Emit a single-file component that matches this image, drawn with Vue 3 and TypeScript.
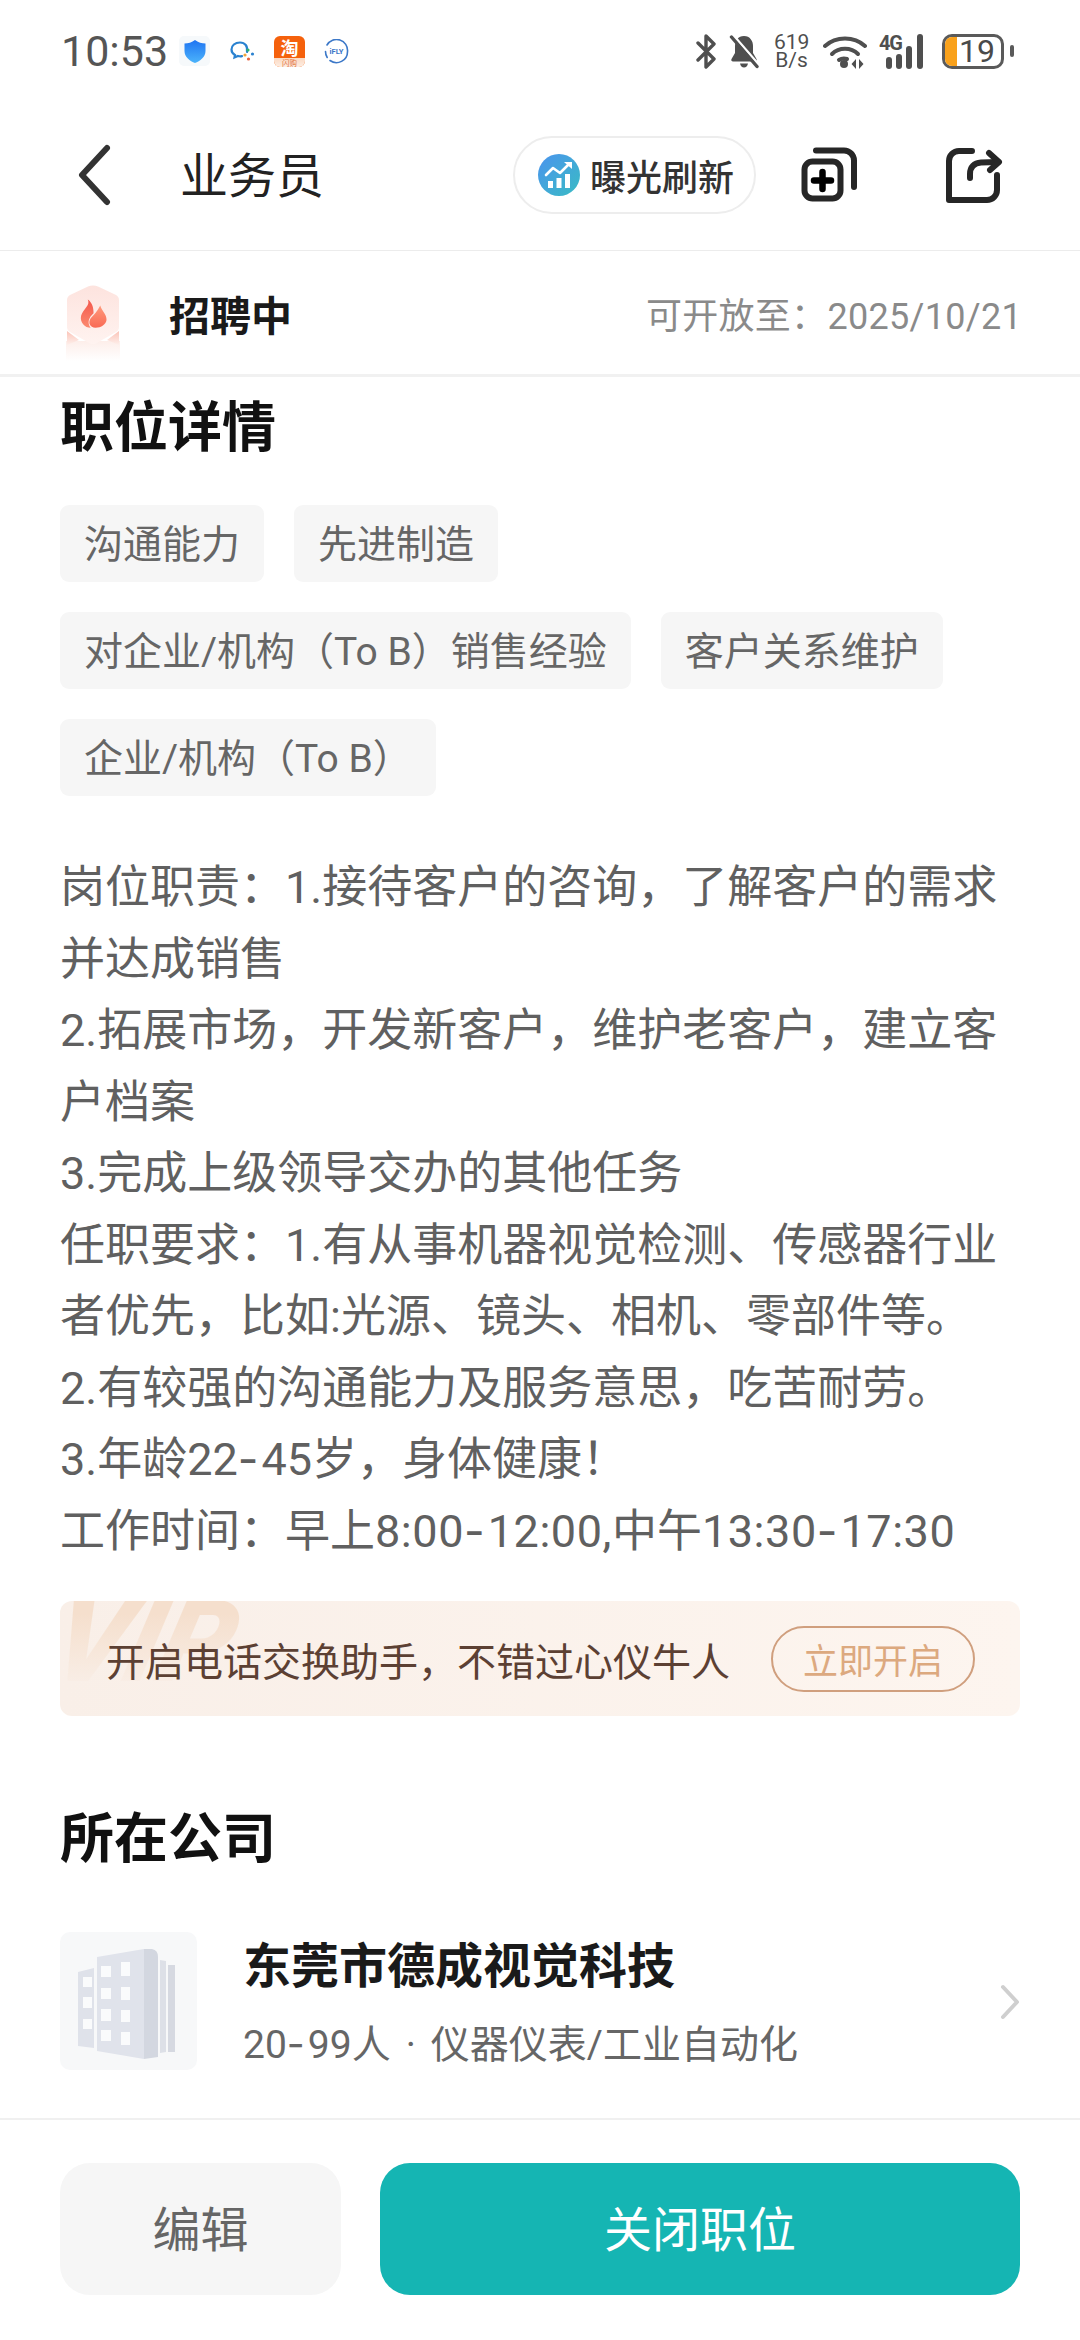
<script setup lang="ts">
const tags: string[] = ['沟通能力', '先进制造', '对企业/机构（To B）销售经验', '客户关系维护', '企业/机构（To B）']
const dutyHead: string = `岗位职责：1.接待客户的咨询，了解客户的需求并达成销售
2.拓展市场，开发新客户，维护老客户，建立客户档案
3.完成上级领导交办的其他任务
任职要求：1.有从事机器视觉检测、传感器行业者优先，比如:光源、镜头、相机、零部件等。
2.有较强的沟通能力及服务意思，吃苦耐劳。
3.年龄22`
const dutyMid: string = `45岁，身体健康！
工作时间：早上`
const mainWindows: number[][] = [[51, 42, 10, 11], [71, 38, 9, 14], [51, 64, 10, 11], [71, 63, 9, 13], [51, 85, 10, 12], [71, 86, 9, 12], [51, 106, 10, 11], [71, 108, 9, 13], [33, 53, 9, 10], [33, 73, 9, 11], [33, 95, 9, 10]]
</script>

<template>
  <div class="page">
    <header class="status">
      <div class="status-left">
        <span class="time">10:53</span>
        <span class="shield-tile">
          <svg width="22" height="23" viewBox="0 0 22 23">
            <defs><linearGradient id="sh" x1="0" y1="0" x2="0" y2="1"><stop offset="0" stop-color="#1f74f2" /><stop offset="1" stop-color="#4cb4fb" /></linearGradient></defs>
            <path d="M11 0 C14 2.5 18 3.5 21.5 3.5 V11 C21.5 17 16 21 11 23 C6 21 .5 17 .5 11 V3.5 C4 3.500 8 2.500 11 0Z" fill="url(#sh)" />
          </svg>
        </span>
        <svg class="wecom" width="25" height="21" viewBox="0 0 25 21" fill="none">
          <path d="M17 11 C18 5 15 1.500 10 1.500 C5 1.500 1.500 4.500 1.500 8.500 C1.500 11 3 13 5 14 L4.500 16.500 L8 15 C9 15.300 10.500 15.500 12 15.200" stroke="#2a82d0" stroke-width="2.200" stroke-linecap="round" />
          <circle cx="18" cy="9" r="1.600" fill="#2fb46a" />
          <circle cx="22.500" cy="13" r="1.600" fill="#2a82d0" />
          <circle cx="15" cy="14" r="1.600" fill="#f2a33a" />
          <circle cx="18.500" cy="18" r="1.600" fill="#e8613c" />
        </svg>
        <svg class="tao" width="31" height="31" viewBox="0 0 31 31">
          <defs><linearGradient id="taolow" x1="0" y1="0" x2="0" y2="1"><stop offset="0" stop-color="#fbd9c2" /><stop offset="1" stop-color="#fdeee4" /></linearGradient></defs>
          <rect width="31" height="31" rx="6" fill="#f5610c" />
          <path d="M0 22 H31 V25 A6 6 0 0 1 25 31 H6 A6 6 0 0 1 0 25Z" fill="url(#taolow)" />
          <text x="15.500" y="18.500" text-anchor="middle" font-size="18" font-weight="700" fill="#fff" class="cjk">淘</text>
          <text x="15.500" y="29.500" text-anchor="middle" font-size="7.500" fill="#e2733c" class="cjk">闪购</text>
        </svg>
        <svg class="ifly" width="25" height="25" viewBox="0 0 25 25" fill="none">
          <path d="M3 6 A11 11 0 0 1 23.500 12.500 A11 11 0 0 1 6 21.500" stroke="#3c78c8" stroke-width="1.600" stroke-linecap="round" />
          <path d="M1.500 12.500 A11 11 0 0 0 3.200 18.500" stroke="#3c78c8" stroke-width="1.600" stroke-linecap="round" />
          <text x="12.500" y="15.200" text-anchor="middle" font-size="7.600" font-weight="700" fill="#3c78c8" class="lat">iFLY</text>
        </svg>
      </div>
      <div class="status-right">
        <svg width="20" height="35" viewBox="0 0 20 35" fill="none" stroke="#4f4f4f" stroke-width="3.400" stroke-linecap="round" stroke-linejoin="round">
          <path d="M2 9 L18 25 L10 33 V2 L18 10 L2 26" />
        </svg>
        <svg class="bell" width="30" height="35" viewBox="0 0 30 35">
          <path d="M15 2 C9 2 6 7 6 12 V19 L2.500 25 C1.800 26.500 2.700 27.500 4 27.500 H26 C27.300 27.500 28.200 26.500 27.500 25 L24 19 V12 C24 7 21 2 15 2Z" fill="#4f4f4f" />
          <path d="M11 29.500 H19 C18.500 32 17 33.500 15 33.500 C13 33.500 11.500 32 11 29.500Z" fill="#4f4f4f" />
          <path d="M5 2 L30 31" stroke="#fff" stroke-width="2.600" />
          <path d="M2.500 3 L28 32.500" stroke="#4f4f4f" stroke-width="3.400" stroke-linecap="round" />
        </svg>
        <span class="speed">619<br />B/s</span>
        <svg class="wifi" width="44" height="35" viewBox="0 0 44 35" fill="none" stroke="#4f4f4f" stroke-width="4" stroke-linecap="round">
          <path d="M2 12 C13 2 31 2 42 12" />
          <path d="M9 20 C16 13 28 13 35 20" />
          <path d="M16 26 C19 24 21 24 24 25" />
          <circle cx="21" cy="30" r="4" fill="#4f4f4f" stroke="none" />
          <path d="M33 25 L28.500 30 L33 35Z M36 25 L40.500 30 L36 35Z" fill="#4f4f4f" stroke="none" />
        </svg>
        <svg class="signal" width="50" height="35" viewBox="0 0 50 35">
          <text x="0" y="16" font-size="20" font-weight="700" fill="#4f4f4f" class="lat" textLength="24">4G</text>
          <rect x="7" y="23" width="6" height="12" rx="3" fill="#4f4f4f" />
          <rect x="17" y="20" width="6" height="15" rx="3" fill="#4f4f4f" />
          <rect x="27" y="12" width="6" height="23" rx="3" fill="#4f4f4f" />
          <rect x="38" y="0" width="6" height="35" rx="3" fill="#4f4f4f" />
        </svg>
        <span class="battery">
          <span class="battery-fill"></span>
          <span class="battery-num">19</span>
        </span>
        <span class="battery-nub"></span>
      </div>
    </header>

    <nav class="nav">
      <svg class="back" width="34" height="62" viewBox="0 0 34 62" fill="none">
        <path d="M29 4 L4 31 L29 58" stroke="#333" stroke-width="6" stroke-linecap="round" stroke-linejoin="round" />
      </svg>
      <h1 class="nav-title">业务员</h1>
      <div class="pill">
        <svg width="42" height="42" viewBox="0 0 42 42">
          <defs><linearGradient id="pg" x1="0" y1="0" x2="1" y2="1"><stop offset="0" stop-color="#4b93ee" /><stop offset="1" stop-color="#39bcc4" /></linearGradient></defs>
          <circle cx="21" cy="21" r="21" fill="url(#pg)" />
          <path d="M8 21 L15 14 L22 19 L31 10" stroke="#fff" stroke-width="2.600" fill="none" stroke-linecap="round" stroke-linejoin="round" />
          <path d="M26 8 H34 V15Z" fill="#fff" />
          <rect x="10" y="27" width="5" height="7" fill="#fff" />
          <rect x="18.500" y="24" width="5" height="10" fill="#fff" />
          <rect x="27" y="20" width="5" height="14" fill="#fff" />
        </svg>
        <span>曝光刷新</span>
      </div>
      <svg class="copy-icon" width="56" height="56" viewBox="0 0 56 56" fill="none">
        <rect x="3.500" y="14.500" width="36" height="37" rx="8" stroke="#262626" stroke-width="6" />
        <path d="M15 3.500 H43 A10 10 0 0 1 53 13.500 V40" stroke="#262626" stroke-width="6" stroke-linecap="round" />
        <path d="M21.500 25 V42 M13 33.500 H30" stroke="#000" stroke-width="6.500" stroke-linecap="round" />
      </svg>
      <svg class="share-icon" width="58" height="56" viewBox="0 0 58 56" fill="none" stroke="#262626" stroke-width="6" stroke-linecap="round" stroke-linejoin="round">
        <path d="M27 4 H14 A10 10 0 0 0 4 14 V53 H42 A10 10 0 0 0 52 43 V28" />
        <path d="M25 31 V27 C25 20 29 16 36 15.500 L53 15" />
        <path d="M44 6 L54 15 L45 23" />
      </svg>
    </nav>

    <section class="recruit">
      <svg class="badge" width="70" height="84" viewBox="0 0 70 84">
        <defs>
          <linearGradient id="hex" x1="0" y1="0" x2="0" y2="1"><stop offset="0" stop-color="#fde3de" /><stop offset="1" stop-color="#fff3f0" /></linearGradient>
          <linearGradient id="fl" x1="0" y1="0" x2="0" y2="1"><stop offset="0" stop-color="#f4574c" /><stop offset="1" stop-color="#fb8a70" /></linearGradient>
          <linearGradient id="fr" x1="0" y1="0" x2="0" y2="1"><stop offset="0" stop-color="#ff9a7c" /><stop offset="1" stop-color="#f96a55" /></linearGradient>
          <linearGradient id="foot" x1="0" y1="0" x2="0" y2="1"><stop offset="0" stop-color="#fbc4b8" /><stop offset="1" stop-color="#fef0ec" /></linearGradient>
          <linearGradient id="glow" x1="0" y1="0" x2="0" y2="1"><stop offset="0" stop-color="#fdeeea" /><stop offset="1" stop-color="#ffffff" /></linearGradient>
        </defs>
        <path d="M8 56 H62 V76 H8Z" fill="url(#glow)" />
        <path d="M9 46 L9 60 L21 55Z M61 46 L61 60 L49 55Z" fill="url(#foot)" />
        <path d="M30 1.500 C33 0 37 0 40 1.500 L58 10 C60 11 61 13 61 15 V42 C61 44 60 46 58 47 L38 58.500 C36 59.500 34 59.500 32 58.500 L12 47 C10 46 9 44 9 42 V15 C9 13 10 11 12 10Z" fill="url(#hex)" />
        <g transform="translate(1 1.500) scale(.96 .86)">
          <path d="M30 15 C33 22 25 26 23 34 C21.500 42 27 48 33 48 C29 42 31 36 36 31 C36 25 35 19 30 15Z" fill="url(#fl)" />
          <path d="M43 22 C44 28 50 32 49.500 39 C49 44 44 48 38 48 C32 48 30 42 33 37 C36 33 40 29 43 22Z" fill="url(#fr)" />
        </g>
      </svg>
      <strong class="recruit-label">招聘中</strong>
      <span class="recruit-date">可开放至：2025/10/21</span>
    </section>

    <main class="content">
      <h2 class="section-title first">职位详情</h2>
      <div class="tags">
        <span v-for="tag in tags" :key="tag" class="tag">{{ tag }}</span>
      </div>
      <p class="duty">{{ dutyHead }}<span class="hy">-</span>{{ dutyMid }}<span class="clock">8:00<span class="hy">-</span>12:00,</span>中午<span class="clock">13:30<span class="hy">-</span>17:30</span></p>

      <div class="vip-banner">
        <span class="vip-mark">VIP</span>
        <span class="vip-text">开启电话交换助手，不错过心仪牛人</span>
        <span class="vip-btn">立即开启</span>
      </div>

      <h2 class="section-title company-title">所在公司</h2>
      <div class="company">
        <div class="company-logo">
          <svg width="137" height="138" viewBox="10 8 137 138">
            <path d="M28 48 L44 44 V124 L28 122Z" fill="#dfe2ea" />
            <path d="M47 33 L94 25 V135 L47 127Z" fill="#e0e3eb" />
            <path d="M94 25 H102 Q108 26 108 33 V133 L94 135Z" fill="#d3d7e0" />
            <path d="M110 36 L116 37 V128 L110 129Z" fill="#dde0e7" />
            <path d="M118 41 L125 41 V128 L118 128Z" fill="#d6d9e1" />
            <rect v-for="(w, i) in mainWindows" :key="i" :x="w[0]" :y="w[1]" :width="w[2]" :height="w[3]" fill="#fafbfc" />
          </svg>
        </div>
        <div class="company-info">
          <div class="company-name">东莞市德成视觉科技</div>
          <div class="company-sub">20<span class="hy">-</span>99人<span class="dot">·</span>仪器仪表/工业自动化</div>
        </div>
        <svg class="company-arrow" width="20" height="36" viewBox="0 0 20 36" fill="none">
          <path d="M3 3 L17 18 L3 33" stroke="#cfcfcf" stroke-width="4" stroke-linecap="round" stroke-linejoin="round" />
        </svg>
      </div>
    </main>

    <footer class="footer">
      <button class="btn btn-edit" type="button">编辑</button>
      <button class="btn btn-close" type="button">关闭职位</button>
    </footer>
  </div>
</template>

<style>
html, body { margin: 0; background: #fff; }
</style>

<style scoped>
.page {
  width: 1080px;
  height: 2340px;
  display: flex;
  flex-direction: column;
  overflow: hidden;
  background: #fff;
  font-family: Roboto, "Noto Sans CJK SC", sans-serif;
}
.cjk { font-family: "Noto Sans CJK SC", sans-serif; }
.lat { font-family: Roboto, sans-serif; }
.hy { font-family: Inter, sans-serif; line-height: 0; letter-spacing: 3px; }
.clock { letter-spacing: .55px; }

.status {
  height: 100px;
  flex: none;
  display: flex;
  align-items: center;
  justify-content: space-between;
  padding: 2px 66px 0 61px;
  box-sizing: border-box;
}
.status-left, .status-right { display: flex; align-items: center; }
.time { font-size: 43px; color: #555; line-height: 50px; width: 118px; }
.shield-tile {
  width: 31px; height: 30px; background: #f6f9fb; border-radius: 5px;
  display: flex; align-items: center; justify-content: center;
}
.wecom { margin-left: 20px; }
.tao { margin-left: 19px; }
.ifly { margin-left: 19px; }
.bell { margin-left: 13px; }
.speed {
  margin-left: 15px; font-size: 21px; line-height: 18px; color: #4f4f4f; width: 35px; text-align: center;
}
.wifi { margin-left: 14px; }
.signal { margin-left: 12px; }
.battery {
  margin-left: 13px; width: 62px; height: 35px; box-sizing: border-box;
  border: 3px solid #5a5a5a; border-radius: 10px; display: flex; overflow: hidden;
}
.battery-fill { width: 12px; background: #f9a11b; flex: none; }
.battery-num { font-size: 32px; line-height: 29px; color: #4a4a4a; margin-left: 2px; }
.battery-nub { width: 4px; height: 12px; background: #5a5a5a; border-radius: 2px; margin-left: 6px; }

.nav {
  height: 151px;
  flex: none;
  box-sizing: border-box;
  border-bottom: 1px solid #ececec;
  display: flex;
  align-items: center;
  padding: 0 0 0 78px;
}
.back { flex: none; }
.nav-title { margin: 0 0 6px 68px; font-size: 48px; font-weight: 400; color: #222; width: 333px; white-space: nowrap; }
.pill {
  width: 243px; height: 78px; box-sizing: border-box; border: 2px solid #ededed; border-radius: 39px;
  display: flex; align-items: center; padding-left: 23px; gap: 10px;
  font-size: 36px; color: #333; font-weight: 500; white-space: nowrap; flex: none;
}
.copy-icon { margin-left: 45px; flex: none; }
.share-icon { margin-left: 88px; flex: none; }

.recruit {
  height: 126px;
  flex: none;
  box-sizing: border-box;
  border-bottom: 3px solid #f1f1f1;
  display: flex;
  align-items: center;
  padding: 0 58px 0 58px;
}
.badge { flex: none; align-self: flex-start; margin-top: 34px; }
.recruit-label { margin-left: 41px; font-size: 41px; color: #1a1a1a; font-weight: 700; }
.recruit-date { margin-left: auto; font-size: 36px; color: #8a8a8a; white-space: nowrap; letter-spacing: .3px; }

.content {
  flex: 1;
  min-height: 0;
  padding: 0 60px;
  overflow: hidden;
}
.section-title { margin: 0; font-size: 54px; line-height: 76px; font-weight: 700; color: #111; }
.first { margin-top: 14px; }
.tags { margin-top: 38px; display: flex; flex-wrap: wrap; gap: 30px; }
.tag {
  height: 77px; line-height: 80px; padding: 0 24px; background: #f6f6f6; border-radius: 9px;
  font-size: 39px; color: #666; white-space: nowrap;
}
.duty {
  margin: 56px 0 0;
  font-size: 45px;
  line-height: 71.5px;
  color: #606060;
  white-space: pre-line;
}
.vip-banner {
  position: relative;
  margin-top: 34px;
  height: 115px;
  border-radius: 12px;
  overflow: hidden;
  display: flex;
  align-items: center;
  justify-content: space-between;
  padding: 0 45px 0 46px;
  background: linear-gradient(90deg, #f9efe8, #fdf5ef);
}
.vip-mark {
  position: absolute;
  left: -4px;
  top: -16px;
  font-size: 114px;
  line-height: 114px;
  font-weight: 900;
  font-style: italic;
  font-family: Roboto, sans-serif;
  transform: skewX(-14deg);
  background: linear-gradient(180deg, #f5dfcd 25%, #f9efe8 92%);
  -webkit-background-clip: text;
  background-clip: text;
  color: transparent;
}
.vip-text { position: relative; font-size: 39px; color: #5c4033; white-space: nowrap; }
.vip-btn {
  position: relative;
  width: 204px; height: 66px; box-sizing: border-box; border: 2px solid #d09f7e; border-radius: 33px;
  display: flex; align-items: center; justify-content: center;
  font-size: 35px; color: #dca97f; white-space: nowrap;
}
.company-title { margin-top: 86px; }
.company { margin-top: 54px; display: flex; align-items: flex-start; }
.company-logo { width: 137px; height: 138px; border-radius: 10px; background: #f7f8f9; flex: none; line-height: 0; }
.company-info { margin-left: 46px; flex: 1; }
.company-name { font-size: 48px; line-height: 64px; font-weight: 700; color: #1a1a1a; margin-top: 3px; }
.company-sub { font-size: 39px; line-height: 52px; color: #666; margin-top: 20px; white-space: nowrap; }
.dot { margin: 0 15px; }
.company-arrow { flex: none; margin-top: 52px; }

.footer {
  height: 222px;
  flex: none;
  box-sizing: border-box;
  border-top: 2px solid #f0f0f0;
  padding: 43px 60px 0;
  display: flex;
  gap: 39px;
}
.btn {
  height: 132px; border: none; border-radius: 30px; font-family: inherit; padding: 0 0 7px;
}
.btn-edit { width: 281px; background: #f6f6f6; color: #666; font-size: 48px; }
.btn-close { flex: 1; background: #15b5b3; color: #fff; font-size: 48px; }
</style>
